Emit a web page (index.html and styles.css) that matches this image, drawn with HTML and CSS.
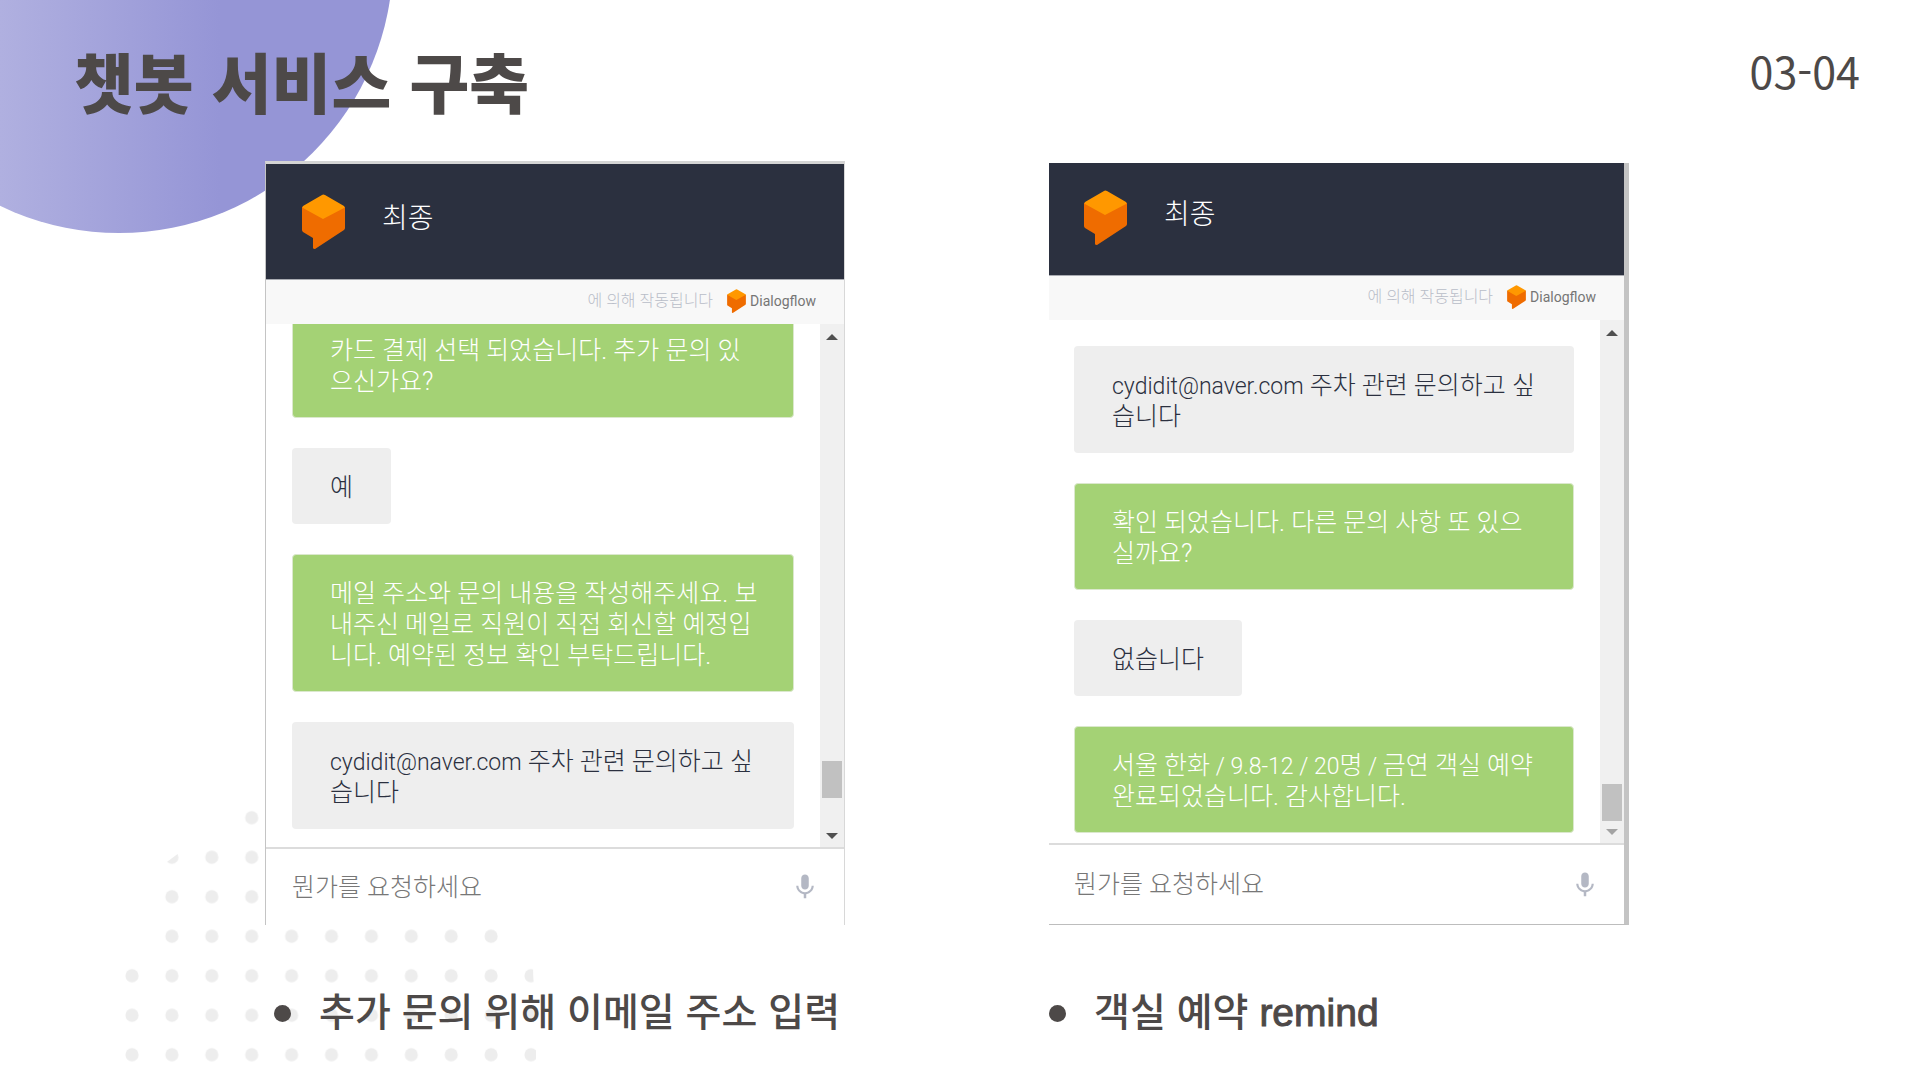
FILE: index.html
```
<!DOCTYPE html>
<html lang="ko">
<head>
    <meta charset="UTF-8">
    <meta name="viewport" content="width=device-width, initial-scale=1.0">
    <title>챗봇 서비스 구축</title>
    <link rel="stylesheet" href="styles.css">
</head>
<body>
    <!-- Shared shapes -->
    <svg class="defs" width="0" height="0" aria-hidden="true">
        <symbol id="logo" viewBox="0 0 43 55">
            <path fill="#ef6c00" d="M0 13v23q0 1 1 2l10 6v10q0 1 2 1l29-19q1-1 1-2V13L21 8z"/>
            <path fill="#ff9800" d="M20 1q1-1 3 0l19 11q1 1 0 2L21 25 1 14q-1-1 0-2z"/>
        </symbol>
        <symbol id="mic" viewBox="0 0 24 24">
            <path fill="#b4b8c4" d="M12 14c1.66 0 3-1.34 3-3V5c0-1.66-1.34-3-3-3S9 3.34 9 5v6c0 1.66 1.34 3 3 3zm5.3-3c0 3-2.54 5.1-5.3 5.1S6.700 14 6.700 11H5c0 3.410 2.720 6.230 6 6.720V21h2v-3.280c3.280-.480 6-3.300 6-6.720h-1.700z"/>
        </symbol>
    </svg>

    <!-- Background decoration -->
    <div class="circle"></div>
    <svg class="dots" width="440" height="270" aria-hidden="true">
        <defs>
            <pattern id="dot" x="12" y="3" width="39.9" height="39.5" patternUnits="userSpaceOnUse">
                <circle cx="20" cy="19.7" r="6.6" fill="#ededed"/>
            </pattern>
            <clipPath id="dotArea">
                <path d="M20 270V170H60V72L79 58L105 50V40H140V5H162V130H405V170H433Q433 190 436 205V270Z"/>
            </clipPath>
        </defs>
        <rect width="440" height="270" fill="url(#dot)" clip-path="url(#dotArea)"/>
    </svg>

    <header class="slide-header">
        <h1>챗봇 서비스 구축</h1>
        <span class="page-number">03-04</span>
    </header>

    <main class="columns">
        <figure>
            <div class="chat chat-email">
                <div class="chat-header">
                    <svg class="logo"><use href="#logo"/></svg>
                    <h2>최종</h2>
                </div>
                <div class="powered">
                    <span>에 의해 작동됩니다</span>
                    <svg class="logo-small"><use href="#logo"/></svg>
                    <span class="brand">Dialogflow</span>
                </div>
                <div class="chat-body">
                    <div class="messages">
                        <p class="bubble bot">카드 결제 선택 되었습니다. 추가 문의 있<br>으신가요?</p>
                        <p class="bubble user">예</p>
                        <p class="bubble bot">메일 주소와 문의 내용을 작성해주세요. 보<br>내주신 메일로 직원이 직접 회신할 예정입<br>니다. 예약된 정보 확인 부탁드립니다.</p>
                        <p class="bubble user"><span class="roman">cydidit@naver.com</span> 주차 관련 문의하고 싶<br>습니다</p>
                    </div>
                    <div class="scrollbar">
                        <span class="arrow up"></span>
                        <span class="thumb"></span>
                        <span class="arrow down"></span>
                    </div>
                </div>
                <form class="ask">
                    <input type="text" placeholder="뭔가를 요청하세요" aria-label="뭔가를 요청하세요">
                    <button type="button" aria-label="음성 입력"><svg><use href="#mic"/></svg></button>
                </form>
            </div>
            <figcaption>추가 문의 위해 이메일 주소 입력</figcaption>
        </figure>

        <figure>
            <div class="chat chat-remind">
                <div class="chat-header">
                    <svg class="logo"><use href="#logo"/></svg>
                    <h2>최종</h2>
                </div>
                <div class="powered">
                    <span>에 의해 작동됩니다</span>
                    <svg class="logo-small"><use href="#logo"/></svg>
                    <span class="brand">Dialogflow</span>
                </div>
                <div class="chat-body">
                    <div class="messages">
                        <p class="bubble user"><span class="roman">cydidit@naver.com</span> 주차 관련 문의하고 싶<br>습니다</p>
                        <p class="bubble bot">확인 되었습니다. 다른 문의 사항 또 있으<br>실까요?</p>
                        <p class="bubble user">없습니다</p>
                        <p class="bubble bot">서울 한화<span class="roman"> / 9.8-12 / 20</span>명<span class="roman"> / </span>금연 객실 예약<br>완료되었습니다. 감사합니다.</p>
                    </div>
                    <div class="scrollbar">
                        <span class="arrow up"></span>
                        <span class="thumb"></span>
                        <span class="arrow down end"></span>
                    </div>
                </div>
                <form class="ask">
                    <input type="text" placeholder="뭔가를 요청하세요" aria-label="뭔가를 요청하세요">
                    <button type="button" aria-label="음성 입력"><svg><use href="#mic"/></svg></button>
                </form>
            </div>
            <figcaption>객실 예약 <span class="latin">remind</span></figcaption>
        </figure>
    </main>
</body>
</html>
```
FILE: styles.css
```
* {
    margin: 0;
    padding: 0;
    box-sizing: border-box;
}

:root {
    --ink: #4d4948;
    --navy: #2b303f;
    --green: #a4d275;
    --gray: #eeeeee;
}

body {
    position: relative;
    min-height: 100vh;
    overflow-x: hidden;
    background: #fff;
    color: var(--ink);
    font-family: "Noto Sans CJK KR", sans-serif;
}

.defs {
    position: absolute;
}

/* Background decoration */
.circle {
    position: absolute;
    left: -155px;
    top: -315px;
    width: 548px;
    height: 548px;
    border-radius: 50%;
    background: linear-gradient(to right, #b0b0e0 155px, #9595d6 375px);
    clip-path: inset(315px 0 0 155px);
}

.dots {
    position: absolute;
    left: 100px;
    top: 795px;
}

/* Title row */
.slide-header {
    position: relative;
    display: flex;
    justify-content: space-between;
    align-items: flex-start;
    height: 161px;
    padding: 32px 60px 0 74px;
}

h1 {
    font-size: 65px;
    font-weight: 900;
    line-height: 96px;
}

.page-number {
    font-size: 43px;
    line-height: 76px;
}

/* Two chat columns */
.columns {
    position: relative;
    display: grid;
    grid-template-columns: repeat(2, minmax(0, 1fr));
    align-items: end;
    gap: 204px;
    padding: 0 291px 0 265px;
}

.chat {
    display: flex;
    flex-direction: column;
    background: #fff;
    font-family: Roboto, "Noto Sans CJK KR", sans-serif;
    font-weight: 300;
}

.chat-email {
    border-left: 1px solid #c4c4c4;
    border-right: 1px solid #d8d8d8;
    border-top: 3px solid #d4d4d4;
}

.chat-remind {
    border-right: 5px solid #c4c4c4;
    border-bottom: 1px solid #bdbdbd;
}

.chat-header {
    display: flex;
    align-items: center;
    gap: 37px;
    height: 115px;
    padding-left: 36px;
    background: var(--navy);
    color: #fff;
}

.chat-remind .chat-header {
    height: 112px;
    padding: 0 0 3px 35px;
}

.chat-header h2 {
    padding-bottom: 6px;
    font-size: 28px;
    font-weight: 300;
    line-height: 36px;
}

.logo {
    width: 43px;
    height: 55px;
}

.powered {
    display: flex;
    align-items: center;
    justify-content: flex-end;
    height: 45px;
    padding: 0 28px 2px 0;
    border-top: 1px solid #a9abb2;
    background: #f8f8f8;
    color: #b9bdc8;
    font-size: 16px;
    line-height: 24px;
}

.logo-small {
    width: 19px;
    height: 24px;
    margin: 0 4px 0 14px;
}

.brand {
    color: #757575;
    font-size: 14px;
    font-weight: 400;
}

/* Messages */
.chat-body {
    display: flex;
    height: 523px;
}

.messages {
    flex: 1;
    display: flex;
    flex-direction: column;
    justify-content: flex-end;
    align-items: flex-start;
    gap: 30px;
    min-width: 0;
    padding: 0 26px 18px;
    overflow: hidden;
}

.chat-remind .messages {
    gap: 30px;
    padding: 0 26px 10px 25px;
}

.bubble {
    flex-shrink: 0;
    padding: 24px 0 21px 38px;
    border-radius: 4px;
    font-size: 25px;
    line-height: 31px;
    white-space: nowrap;
}

.bubble.bot {
    align-self: stretch;
    border: 1px solid #dbe8cd;
    padding: 23px 0 20px 37px;
    background: var(--green);
    color: #fff;
}

.bubble.user {
    min-width: 98px;
    padding-right: 38px;
    background: var(--gray);
    color: #2b303f;
}

.bubble.user:has(br) {
    align-self: stretch;
    padding-right: 0;
}

.roman {
    font-size: 23px;
    line-height: 1;
}

/* Scrollbar */
.scrollbar {
    display: flex;
    flex-direction: column;
    align-items: center;
    width: 24px;
    padding: 10px 0 8px;
    background: #f0f0f0;
}

.arrow {
    border: 6px solid transparent;
}

.arrow.up {
    margin-bottom: auto;
    border-top-width: 0;
    border-bottom-color: #505050;
}

.arrow.down {
    margin-top: 35px;
    border-bottom-width: 0;
    border-top-color: #505050;
}

.arrow.end {
    margin-top: 8px;
    border-top-color: #a3a3a3;
}

.thumb {
    width: 20px;
    height: 37px;
    background: #c1c1c1;
}

/* Input row */
.ask {
    display: flex;
    align-items: center;
    height: 78px;
    padding: 0 24px 0 26px;
    border-top: 2px solid #dcdcdc;
}

.chat-remind .ask {
    height: 81px;
    padding-left: 25px;
}

.ask input {
    flex: 1;
    min-width: 0;
    height: 48px;
    border: none;
    outline: none;
    background: none;
    font: inherit;
    font-size: 25px;
}

.ask input::placeholder {
    color: #777;
}

.ask button {
    display: flex;
    border: none;
    background: none;
    cursor: pointer;
}

.ask svg {
    width: 30px;
    height: 30px;
}

/* Captions */
figcaption {
    display: flex;
    align-items: center;
    margin-top: 54px;
    padding-left: 9px;
    font-size: 39px;
    font-weight: 500;
    line-height: 60px;
    white-space: pre;
}

figcaption::before {
    content: "";
    width: 17px;
    height: 17px;
    margin: 8px 28px 0 0;
    border-radius: 50%;
    background: var(--ink);
}

.chat-remind + figcaption {
    padding-left: 0;
}

.latin {
    padding-top: 8px;
    font-family: "Liberation Sans", sans-serif;
    font-weight: 400;
    line-height: 52px;
    -webkit-text-stroke: 1px var(--ink);
}
```
